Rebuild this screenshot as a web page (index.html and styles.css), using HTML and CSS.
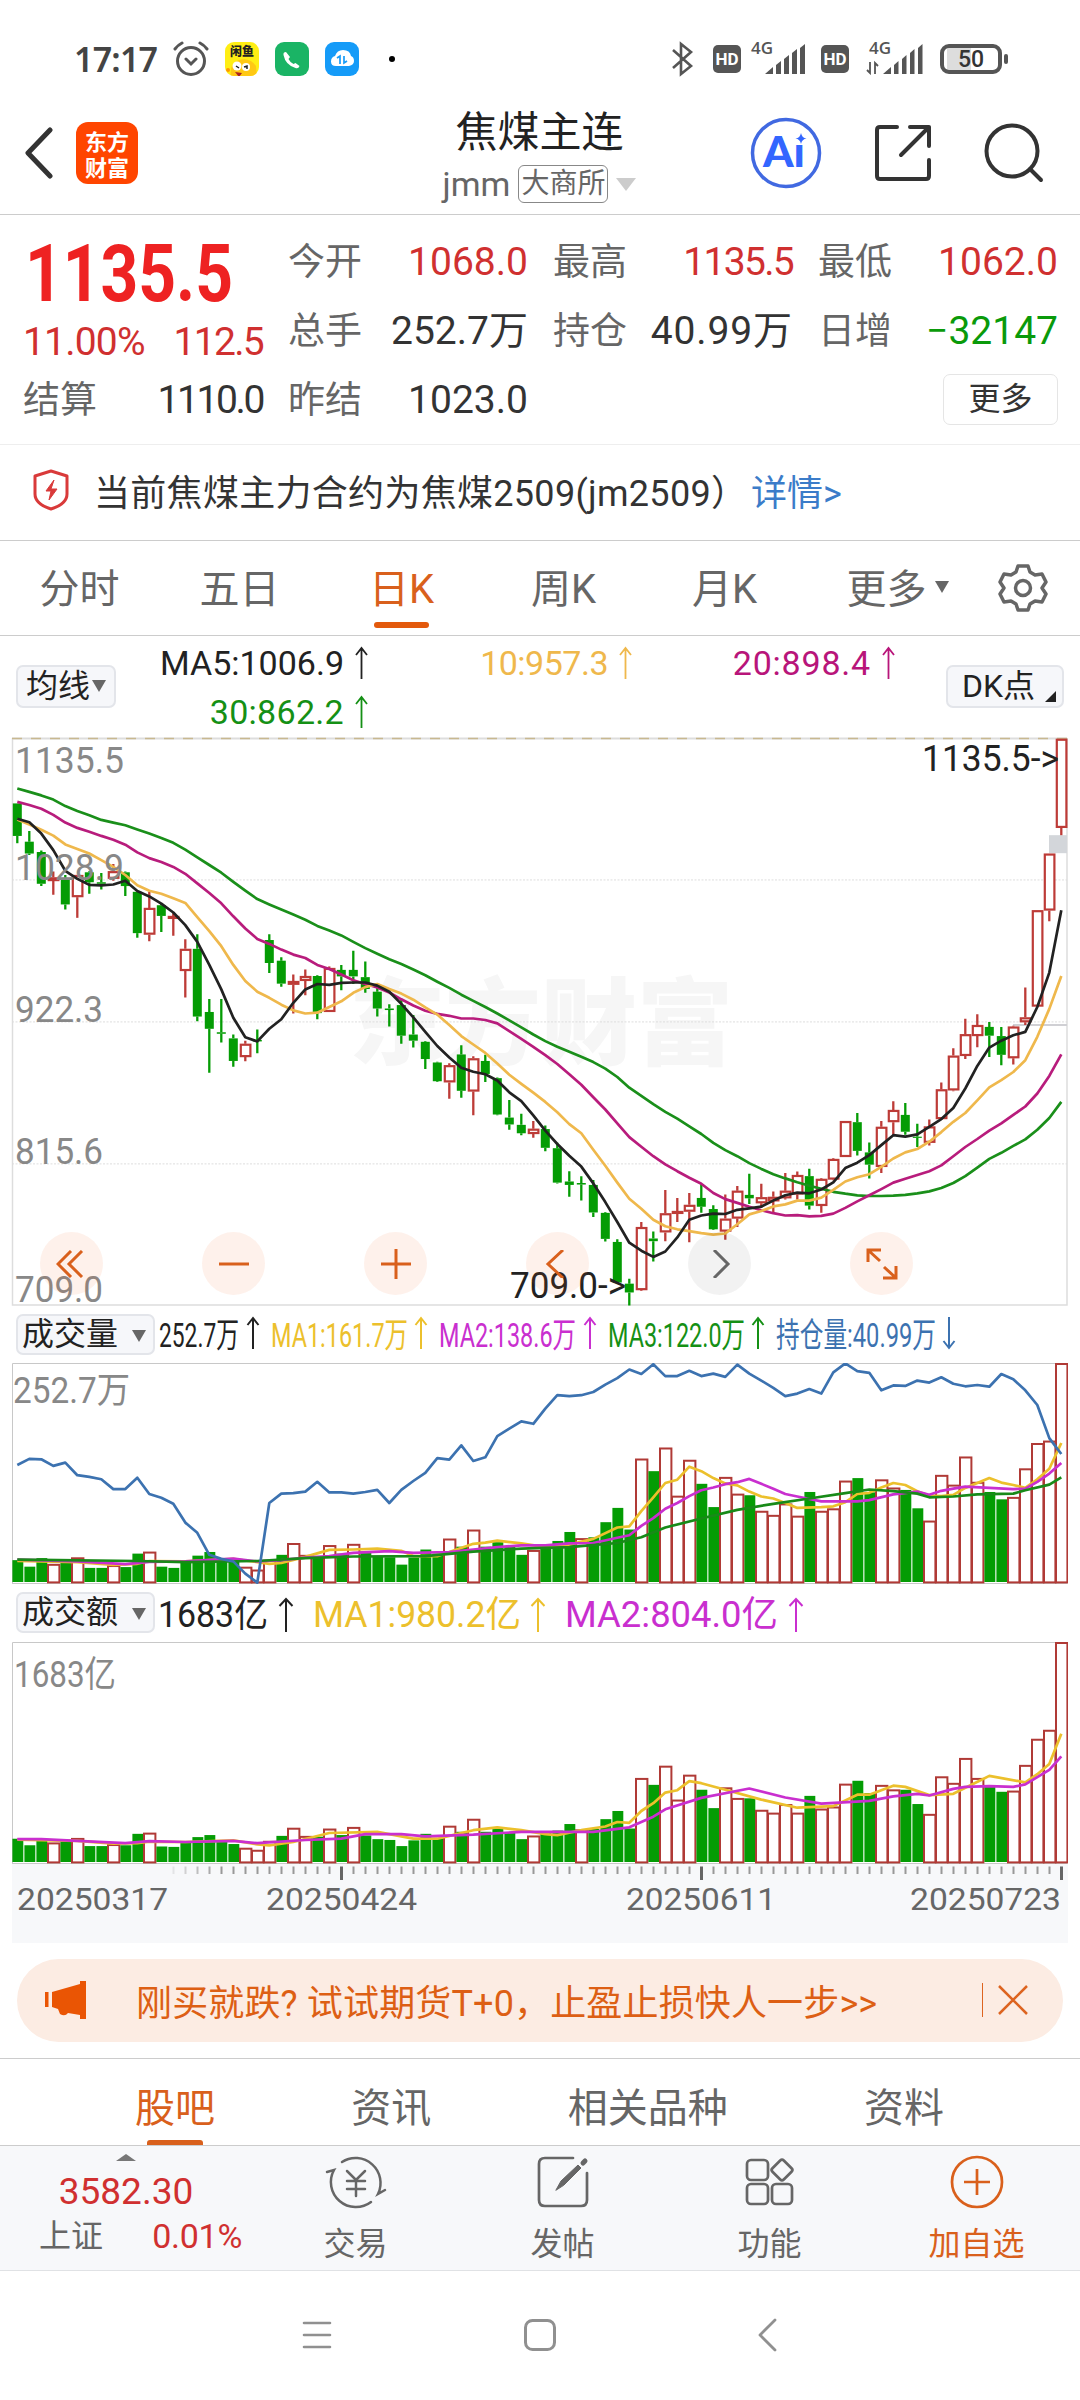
FILE: index.html
```html
<!DOCTYPE html>
<html lang="zh-CN">
<head>
  <meta charset="UTF-8">
  <meta name="viewport" content="width=device-width, initial-scale=1.0">
  <title>焦煤主连</title>
  <link rel="stylesheet" href="styles.css">
</head>
<body>
<div class="status-bar">
  <div class="status-left">
    <span class="clock">17:17</span>
    <svg class="alarm" width="36" height="36" viewBox="0 0 36 36" fill="none" stroke="#555" stroke-width="3" stroke-linecap="round">
      <circle cx="18" cy="20" r="13.5"/><path d="M13 18l5 5 5-5M2 8q3-4 7-6M34 8q-3-4-7-6"/>
    </svg>
    <div class="app-dot yellow">
      <span>闲鱼</span>
      <svg width="34" height="20" viewBox="0 0 34 20"><path d="M6 20Q4 6 14 3q11-3 17 6l1 11z" fill="#ffc814"/><circle cx="12" cy="9" r="4.5" fill="#fff"/><circle cx="21" cy="10" r="4" fill="#fff"/><path d="M11 9l3 2M19 10l3-1v3" stroke="#222" stroke-width="1.5" fill="none"/><path d="M10 15l7 1-3 4z" fill="#a22"/><circle cx="3" cy="13" r="2" fill="#f90"/></svg>
    </div>
    <div class="app-dot green">
      <svg width="34" height="34" viewBox="0 0 34 34"><path d="M11 10l4 5-1.500 2q2 4 5 5l2-1 4 3q-1 3-4 2-10-3-12-13-.5-3 2.500-3z" fill="#fff"/></svg>
    </div>
    <div class="app-dot blue">
      <svg width="34" height="34" viewBox="0 0 34 34"><path d="M11 24q-5 0-5-4.500T10 14q2-6 8-6 7 0 8 6 3 1 3 5t-5 5z" fill="#fff"/><path d="M12 16l3-2v8M19 14v7l3-2" stroke="#159bf8" stroke-width="1.700" fill="none"/></svg>
    </div>
    <span class="more-dot"></span>
  </div>
  <div class="status-right">
    <svg width="24" height="36" viewBox="0 0 24 36" fill="none" stroke="#555" stroke-width="2.600"><path d="M2 9l18 16-10 8V3l10 8L2 27"/></svg>
    <span class="hd">HD</span>
    <div class="signal">
      <span>4G</span>
      <svg width="56" height="32" viewBox="0 0 56 32" fill="#555"><path d="M14 31l8-7v7zM25 31V22l5-4v13zM33 31V16l5-4v19zM41 31V10l5-4v25zM49 31V5l5-4v30z"/></svg>
    </div>
    <span class="hd">HD</span>
    <div class="signal second">
      <span>4G</span>
      <svg width="58" height="32" viewBox="0 0 58 32" fill="#555"><path d="M17 31l8-7v7zM28 31V22l4.500-4v13zM36 31V16l4.500-4v19zM44 31V10l4.500-4v25zM52 31V5l4.500-4v30z"/><path d="M1 27l3 3V19M9 31V20l3 3" fill="none" stroke="#555" stroke-width="1.800"/></svg>
    </div>
    <div class="battery"><span>50</span></div>
  </div>
</div>

<header class="header">
  <div class="header-left">
    <svg width="30" height="52" viewBox="0 0 30 52" fill="none" stroke="#333" stroke-width="5" stroke-linecap="round" stroke-linejoin="round"><path d="M26 3L4 26l22 23"/></svg>
    <div class="logo">东方<br>财富</div>
  </div>
  <div class="header-title">
    <h1>焦煤主连</h1>
    <div class="sub-title">jmm<span class="exchange">大商所</span><i class="tri down light"></i></div>
  </div>
  <div class="header-actions">
    <svg width="72" height="72" viewBox="0 0 72 72">
      <circle cx="36" cy="36" r="33.500" fill="none" stroke="#4169e1" stroke-width="3.500"/>
      <text x="13" y="50" class="ai-text" textLength="42" lengthAdjust="spacingAndGlyphs">Aı</text>
      <path d="M51 16q1 5 5.500 5.500Q52 22 51 27q-1-5-5.500-5.500Q50 21 51 16z" fill="#3366ff"/>
    </svg>
    <svg width="58" height="58" viewBox="0 0 58 58" fill="none" stroke="#333" stroke-width="4" stroke-linecap="round" stroke-linejoin="round"><path d="M23 3H6q-3 0-3 3v46q0 3 3 3h46q3 0 3-3V36M36 3h19v19M55 3L27 31"/></svg>
    <svg width="60" height="60" viewBox="0 0 60 60" fill="none" stroke="#333" stroke-width="4" stroke-linecap="round"><circle cx="28" cy="28" r="25.500"/><path d="M46 46l11 11"/></svg>
  </div>
</header>

<section class="quote">
  <div class="quote-main">
    <svg class="last-price" width="240" height="92" viewBox="0 0 240 92"><text x="2" y="74" textLength="208" lengthAdjust="spacingAndGlyphs">1135.5</text></svg>
    <div class="change"><span>11.00%</span><span class="narrow">112.5</span></div>
  </div>
  <div class="item"><label>今开</label><span class="up">1068.0</span></div>
  <div class="item"><label>最高</label><span class="up narrow">1135.5</span></div>
  <div class="item"><label>最低</label><span class="up">1062.0</span></div>
  <div class="item"><label>总手</label><span>252.7万</span></div>
  <div class="item"><label>持仓</label><span class="wide">40.99万</span></div>
  <div class="item"><label>日增</label><span class="down-text">−32147</span></div>
  <div class="item"><label>结算</label><span class="narrow more">1110.0</span></div>
  <div class="item"><label>昨结</label><span>1023.0</span></div>
  <div class="item"></div>
  <div class="item end"><button class="more-btn">更多</button></div>
</section>

<section class="notice">
  <svg width="38" height="42" viewBox="0 0 38 42" fill="none" stroke="#d93a3a" stroke-width="3" stroke-linejoin="round"><path d="M19 2l16 5v18q0 10-16 15Q3 35 3 25V7z"/><path d="M22 11l-8 11h5l-2 9 8-11h-6z" fill="#d93a3a" stroke-width="1"/></svg>
  <span class="notice-text">当前焦煤主力合约为焦煤2509(jm2509）</span>
  <a class="notice-link">详情&gt;</a>
</section>

<nav class="period-tabs">
  <span>分时</span>
  <span>五日</span>
  <span class="active">日K</span>
  <span>周K</span>
  <span>月K</span>
  <span>更多<i class="tri down"></i></span>
  <div class="gear">
    <svg width="50" height="50" viewBox="0 0 50 50" fill="none" stroke="#666" stroke-width="3.500" stroke-linejoin="round"><path d="M20 3h10l2 6 5 3 7-1 4 8-4 6 4 6-4 8-7-1-5 3-2 6H20l-2-6-5-3-7 1-4-8 4-6-4-6 4-8 7 1 5-3z"/><circle cx="25" cy="25" r="7.500"/></svg>
  </div>
</nav>

<section class="ma-row">
  <button class="tool-btn ma-btn">均线<i class="tri down"></i></button>
  <div class="ma-values">
    <span class="c-black">MA5:1006.9<svg class="arrow" width="13" height="34" viewBox="0 0 13 34"><path d="M6.500 33V2M1 9l5.500-7L12 9"/></svg></span>
    <span class="c-yellow">10:957.3<svg class="arrow" width="13" height="34" viewBox="0 0 13 34"><path d="M6.500 33V2M1 9l5.500-7L12 9"/></svg></span>
    <span class="c-magenta">20:898.4<svg class="arrow" width="13" height="34" viewBox="0 0 13 34"><path d="M6.500 33V2M1 9l5.500-7L12 9"/></svg></span>
    <span class="c-green">30:862.2<svg class="arrow" width="13" height="34" viewBox="0 0 13 34"><path d="M6.500 33V2M1 9l5.500-7L12 9"/></svg></span>
  </div>
  <button class="tool-btn dk-btn">DK点<i class="corner"></i></button>
</section>

<section class="charts">
  <div class="price-pane">
    <svg id="priceChart" width="1056" height="568" viewBox="0 0 1056 568"></svg>
    <div class="chart-tools">
      <button><svg class="rewind" width="28" height="28" viewBox="0 0 28 28"><path d="M15 1L2 14l13 13M26 1L13 14l13 13"/></svg></button>
      <button><svg width="32" height="32" viewBox="0 0 32 32"><path d="M1 16h30"/></svg></button>
      <button><svg width="32" height="32" viewBox="0 0 32 32"><path d="M1 16h30M16 1v30"/></svg></button>
      <button><svg width="28" height="28" viewBox="0 0 28 28"><path d="M19 0L4 14l15 14"/></svg></button>
      <button class="disabled"><svg width="28" height="28" viewBox="0 0 28 28"><path d="M8 0l14 14L8 28"/></svg></button>
      <button><svg width="32" height="32" viewBox="0 0 32 32"><path d="M2 14V2h13M2 2l12 11M30 18v12H17M30 30L18 19"/></svg></button>
    </div>
  </div>

  <div class="sub-head">
    <button class="tool-btn pick">成交量<i class="tri down"></i></button>
    <svg width="900" height="56" viewBox="0 0 900 56" class="head-text">
      <text x="4" y="41" textLength="80" lengthAdjust="spacingAndGlyphs" class="c-black">252.7万</text>
      <text x="116" y="41" textLength="137" lengthAdjust="spacingAndGlyphs" class="c-gold">MA1:161.7万</text>
      <text x="284" y="41" textLength="137" lengthAdjust="spacingAndGlyphs" class="c-purple">MA2:138.6万</text>
      <text x="453" y="41" textLength="137" lengthAdjust="spacingAndGlyphs" class="c-green">MA3:122.0万</text>
      <text x="621" y="41" textLength="160" lengthAdjust="spacingAndGlyphs" class="c-blue">持仓量:40.99万</text>
      <path class="c-black" d="M98 43V12M92.500 19l5.500-7 5.500 7"/>
      <path class="c-gold" d="M266 43V12M260.500 19l5.500-7 5.500 7"/>
      <path class="c-purple" d="M435 43V12M429.500 19l5.500-7 5.500 7"/>
      <path class="c-green" d="M603 43V12M597.500 19l5.500-7 5.500 7"/>
      <path class="c-blue" d="M794 11v31M788.500 35l5.500 7 5.500-7"/>
    </svg>
  </div>
  <svg id="volumeChart" width="1056" height="221" viewBox="0 0 1056 221"></svg>

  <div class="sub-head second">
    <button class="tool-btn pick">成交额<i class="tri down"></i></button>
    <svg width="900" height="56" viewBox="0 0 900 56" class="head-text wide">
      <text x="3" y="43" textLength="110" lengthAdjust="spacingAndGlyphs" class="c-black">1683亿</text>
      <text x="158" y="43" textLength="208" lengthAdjust="spacingAndGlyphs" class="c-gold">MA1:980.2亿</text>
      <text x="410" y="43" textLength="213" lengthAdjust="spacingAndGlyphs" class="c-purple">MA2:804.0亿</text>
      <path class="c-black" d="M131 48V15M124.500 22l6.500-7 6.500 7"/>
      <path class="c-gold" d="M383 48V15M376.500 22l6.500-7 6.500 7"/>
      <path class="c-purple" d="M641 48V15M634.500 22l6.500-7 6.500 7"/>
    </svg>
  </div>
  <svg id="turnoverChart" width="1056" height="222" viewBox="0 0 1056 222"></svg>
  <svg id="axis" class="axis" width="1056" height="79" viewBox="0 0 1056 79"></svg>
</section>

<section class="banner">
  <svg width="44" height="38" viewBox="0 0 44 38" fill="#ea5504"><path d="M1 11h3.500v15H1zM8 11l28-8V0h6v38h-6v-4l-12-2q-3 4-8 1l-2-5-6-2z"/></svg>
  <span class="banner-text">刚买就跌? 试试期货T+0，止盈止损快人一步&gt;&gt;</span>
  <i class="sep"></i>
  <svg width="30" height="30" viewBox="0 0 30 30" fill="none" stroke="#dd6420" stroke-width="2.500"><path d="M1 1l28 28M29 1L1 29"/></svg>
</section>

<nav class="info-tabs">
  <span class="active">股吧</span>
  <span>资讯</span>
  <span>相关品种</span>
  <span>资料</span>
</nav>

<footer class="bottom-bar">
  <div class="index-box">
    <i class="tri up"></i>
    <div class="index-value">3582.30</div>
    <div class="index-line"><label>上证</label><span>0.01%</span></div>
  </div>
  <div class="action">
    <svg width="62" height="54" viewBox="0 0 62 54" fill="none" stroke="#666" stroke-width="2.500" stroke-linecap="round"><path d="M17 7A25 25 0 0 1 53 39l7-4M46 47A25 25 0 0 1 9 15l-7 2"/><path d="M22 16l9 9 9-9M31 25v16M22 26h18M22 34h18"/></svg>
    <span>交易</span>
  </div>
  <div class="action">
    <svg width="54" height="54" viewBox="0 0 54 54" fill="none" stroke="#666" stroke-width="2.700" stroke-linecap="round"><path d="M37 3H9Q3 3 3 9v36q0 6 6 6h36q6 0 6-6V18"/><path d="M20 35l5-9L42 10l3 3-17 17z" fill="#666" stroke-width="1"/><path d="M47 8l2-2" stroke-width="5"/></svg>
    <span>发帖</span>
  </div>
  <div class="action">
    <svg width="54" height="54" viewBox="0 0 54 54" fill="none" stroke="#666" stroke-width="2.700"><rect x="4" y="5" width="21" height="20" rx="4"/><rect x="4" y="29" width="21" height="20" rx="4"/><rect x="29" y="29" width="20" height="20" rx="4"/><rect x="31" y="7" width="16" height="16" rx="2.500" transform="rotate(45 39 15)"/></svg>
    <span>功能</span>
  </div>
  <div class="action accent">
    <svg width="54" height="54" viewBox="0 0 54 54" fill="none" stroke="#d9601c" stroke-width="2.700"><circle cx="27" cy="27" r="25"/><path d="M14 27h26M27 14v26"/></svg>
    <span>加自选</span>
  </div>
</footer>

<div class="system-nav">
  <svg width="30" height="28" viewBox="0 0 30 28" fill="none" stroke="#909090" stroke-width="2.600" stroke-linecap="round"><path d="M2 2h26M2 14h26M2 26h26"/></svg>
  <svg width="32" height="32" viewBox="0 0 32 32" fill="none" stroke="#909090" stroke-width="3"><rect x="1.500" y="1.500" width="29" height="29" rx="7"/></svg>
  <svg width="20" height="34" viewBox="0 0 20 34" fill="none" stroke="#909090" stroke-width="2.800" stroke-linecap="round" stroke-linejoin="round"><path d="M18 2L3 17l15 15"/></svg>
</div>

<script src="chart.js"></script>
</body>
</html>
```
FILE: styles.css
```css
* {
  box-sizing: border-box;
}
body {
  margin: 0;
  width: 1080px;
  height: 2400px;
  overflow: hidden;
  background: #fff;
  color: #333;
  font-family: Roboto, "Noto Sans CJK SC", sans-serif;
}
svg {
  display: block;
  flex: none;
}
button {
  font-family: inherit;
  padding: 0;
}
.tri {
  display: inline-block;
  border: 7px solid transparent;
}
.tri.down {
  border-top: 12px solid #666;
  border-bottom: 0;
}
.tri.up {
  border-width: 0 10px 7px;
  border-bottom-color: #777;
}
.tri.down.light {
  border-width: 13px 10px 0;
  border-top-color: #ccc;
}

/* status bar */
.status-bar {
  height: 100px;
  padding: 17px 72px 0 74px;
  display: flex;
  justify-content: space-between;
  align-items: center;
}
.status-left, .status-right {
  display: flex;
  align-items: center;
  height: 36px;
}
.clock {
  font: 600 34px "Noto Sans", sans-serif;
  color: #444;
  width: 84px;
  white-space: nowrap;
  letter-spacing: -0.8px;
}
.alarm {
  margin: 0 16px 0 15px;
}
.app-dot {
  width: 34px;
  height: 34px;
  margin-right: 16px;
  border-radius: 9px;
  overflow: hidden;
}
.yellow {
  background: #ffee14;
}
.yellow span {
  display: block;
  height: 15px;
  font: 900 12px/17px "Noto Sans CJK SC", sans-serif;
  color: #222;
  text-align: center;
}
.green {
  background: #1ab465;
}
.blue {
  background: #159bf8;
}
.more-dot {
  width: 6px;
  height: 6px;
  margin-left: 14px;
  border-radius: 50%;
  background: #000;
}
.hd {
  width: 28px;
  height: 28px;
  margin: 0 10px 0 18px;
  border-radius: 5px;
  background: #555;
  color: #fff;
  font: 700 17px/28px Roboto, sans-serif;
  text-align: center;
}
.signal {
  position: relative;
}
.signal span {
  position: absolute;
  left: 0;
  top: -5px;
  font: 600 17px/20px "Open Sans", sans-serif;
  color: #555;
}
.signal.second {
  margin: 0 16px 0 -4px;
}
.signal.second span {
  left: 3px;
}
.signal + .hd {
  margin-left: 14px;
  margin-right: 21px;
}
.battery {
  position: relative;
  width: 62px;
  height: 30px;
  margin-right: 6px;
  border: 4px solid #555;
  border-radius: 9px;
  background: linear-gradient(90deg, #fff 3px, #ddd 3px, #ddd 50%, #fff 50%);
  font: 500 23px/23px Roboto, sans-serif;
  text-align: center;
}
.battery::after {
  content: "";
  position: absolute;
  right: -10px;
  top: 6px;
  width: 4px;
  height: 10px;
  border-radius: 2px;
  background: #555;
}

/* header */
.header {
  height: 115px;
  padding: 0 36px 8px 24px;
  border-bottom: 1px solid #ccc;
  display: grid;
  grid-template-columns: 1fr 340px 1fr;
  align-items: center;
}
.header-left {
  display: flex;
  align-items: center;
  gap: 22px;
}
.logo {
  width: 62px;
  height: 62px;
  padding-top: 5px;
  border-radius: 12px;
  background: #ff4500;
  color: #fff;
  font: 700 22px/26px "Noto Sans CJK SC", sans-serif;
  text-align: center;
}
.header-title {
  padding: 5px 0 0 11px;
  text-align: center;
}
.header-title h1 {
  margin: 0 0 3px;
  font-size: 42px;
  line-height: 54px;
  font-weight: 400;
  color: #222;
}
.sub-title {
  display: flex;
  justify-content: center;
  align-items: center;
  gap: 8px;
  height: 42px;
  font-size: 34px;
  color: #666;
}
.exchange {
  height: 38px;
  padding: 0 2px;
  border: 1.5px solid #888;
  border-radius: 6px;
  font-size: 28px;
  line-height: 35px;
}
.header-actions {
  display: flex;
  justify-content: flex-end;
  align-items: center;
  gap: 52px;
}
.ai-text {
  font: 900 42px Lato, sans-serif;
  fill: #3366ff;
}

/* quote */
.quote {
  height: 230px;
  padding: 12px 22px 0 23px;
  border-bottom: 1px solid #eee;
  display: grid;
  grid-template-columns: repeat(4, 1fr);
  grid-auto-rows: 69px;
  column-gap: 25px;
}
.quote-main {
  grid-row: span 2;
}
.last-price {
  font-size: 79px;
  font-weight: 700;
  fill: #ee2222;
}
.change {
  display: flex;
  justify-content: space-between;
  padding-top: 3px;
  font-size: 39px;
  line-height: 40px;
  letter-spacing: -0.8px;
  color: #d03030;
}
.item {
  display: flex;
  justify-content: space-between;
  align-items: center;
  height: 71px;
  font-size: 39px;
  line-height: 45px;
}
.item span {
  height: 45px;
}
.item label {
  height: 45px;
  margin-top: -1px;
  font-size: 37px;
  color: #666;
}
.narrow {
  letter-spacing: -1.7px;
}
.narrow.more {
  letter-spacing: -2.4px;
}
.item .wide {
  letter-spacing: 0.9px;
}
.item.end {
  justify-content: flex-end;
}
.up {
  color: #d03030;
}
.down-text {
  color: #0a9a0a;
}
.more-btn {
  width: 115px;
  height: 51px;
  margin-top: -3px;
  border: 1.5px solid #e5e5e5;
  border-radius: 7px;
  background: #fff;
  font-size: 32px;
  line-height: 44px;
  color: #333;
}

/* notice */
.notice {
  height: 96px;
  padding: 0 0 6px 32px;
  border-bottom: 1px solid #ccc;
  display: flex;
  align-items: center;
  font-size: 36px;
}
.notice-text {
  width: 633px;
  margin-left: 24px;
  letter-spacing: 0.3px;
  white-space: nowrap;
}
.notice-link {
  margin-left: 24px;
  color: #3b7cc9;
}

/* period tabs */
.period-tabs {
  height: 95px;
  border-bottom: 1px solid #ccc;
  display: grid;
  grid-template-columns: 159px 161px 163px repeat(3, 161px) 1fr;
  font-size: 40px;
  line-height: 98px;
  text-align: center;
  color: #666;
}
.period-tabs span {
  position: relative;
  height: 94px;
  white-space: nowrap;
}
.period-tabs .tri {
  margin: 0 -6px 10px 8px;
}
.period-tabs span:nth-child(6) {
  padding-left: 18px;
}
.period-tabs .active {
  color: #d9601c;
}
.period-tabs .active::after {
  content: "";
  position: absolute;
  left: 54px;
  bottom: 7px;
  width: 55px;
  height: 6px;
  border-radius: 3px;
  background: #e3590c;
}
.gear {
  padding: 22px 0 0 32px;
}

/* moving averages */
.ma-row {
  height: 102px;
  padding: 0 16px;
  display: flex;
  align-items: flex-start;
}
.tool-btn {
  flex: none;
  height: 43px;
  border: 2px solid #e3e5ea;
  border-radius: 7px;
  background: #f6f7fa;
  color: #222;
  font-size: 32px;
  line-height: 39px;
  white-space: nowrap;
}
.ma-btn {
  width: 100px;
  margin-top: 29px;
}
.ma-btn .tri {
  margin: 0 0 5px 2px;
}
.dk-btn {
  width: 118px;
  margin: 29px 0 0 auto;
}
.corner {
  display: inline-block;
  margin: 0 -8px -5px 10px;
  border-left: 11px solid transparent;
  border-bottom: 11px solid #222;
}
.ma-values {
  width: 791px;
  display: grid;
  grid-template-columns: 252px 264px 263px;
  grid-auto-rows: 49px;
  margin-top: 2px;
  font-size: 34px;
}
.ma-values span {
  display: flex;
  justify-content: flex-end;
  align-items: center;
  gap: 11px;
}
.ma-values .c-magenta {
  letter-spacing: 0.8px;
}
.ma-values .c-green {
  letter-spacing: 0.3px;
}
.ma-values .c-yellow {
  letter-spacing: -0.5px;
}
.ma-values .arrow {
  fill: none;
  stroke-width: 1.8;
}
.c-black { color: #222; fill: #222; stroke: #222; }
.c-yellow { color: #efb84c; stroke: #efb84c; }
.c-magenta { color: #b8157a; stroke: #b8157a; }
.c-green { color: #159015; fill: #159015; stroke: #159015; }
.c-gold { fill: #ecc02c; stroke: #ecc02c; }
.c-purple { fill: #c92fcf; stroke: #c92fcf; }
.c-blue { fill: #3c72b0; stroke: #3c72b0; }

/* charts */
.charts {
  padding-left: 12px;
}
.price-pane {
  position: relative;
}
#priceChart, .last-price {
  overflow: visible;
}
.chart-tools {
  position: absolute;
  left: 28px;
  top: 494px;
  display: flex;
  gap: 99px;
}
.chart-tools button {
  width: 63px;
  height: 63px;
  border: 0;
  border-radius: 50%;
  background: rgba(245, 100, 30, 0.09);
  display: flex;
  justify-content: center;
  align-items: center;
}
.chart-tools .rewind {
  margin-right: 4px;
}
.chart-tools path {
  fill: none;
  stroke: #d9601c;
  stroke-width: 3;
}
.chart-tools .disabled {
  background: rgba(0, 0, 0, 0.05);
}
.chart-tools .disabled path {
  stroke: #666;
}
.sub-head {
  height: 57px;
  padding: 0 0 0 4px;
  display: flex;
}
.sub-head.second {
  height: 58px;
}
.pick {
  width: 139px;
  height: 41px;
  margin-top: 8px;
  padding-left: 4px;
  line-height: 37px;
  text-align: left;
}
.pick .tri {
  margin: 0 0 3px 14px;
}
.head-text text {
  font-size: 34px;
  stroke: none;
}
.head-text.wide text {
  font-size: 36px;
}
.head-text path {
  fill: none;
  stroke-width: 2;
}
.scale-label {
  font-size: 36px;
  fill: #888;
}
.mark-label {
  font-size: 36px;
  fill: #222;
}
.watermark {
  font: 900 95px "Noto Sans CJK SC", sans-serif;
  fill: #f6f6f6;
}
.axis {
  background: #f7f8fa;
}
.axis text {
  font-size: 32px;
  fill: #666;
}
.line {
  fill: none;
  stroke-width: 2.7;
  stroke-linejoin: round;
}

/* banner */
.banner {
  width: 1046px;
  height: 83px;
  margin: 16px 17px;
  padding: 0 35px 1px 27px;
  border-radius: 42px;
  background: #fcece3;
  display: flex;
  align-items: center;
  font-size: 36px;
  color: #dd5f14;
}
.banner-text {
  margin: 0 auto 0 48px;
  letter-spacing: 0.15px;
  white-space: nowrap;
}
.sep {
  width: 1px;
  height: 34px;
  margin-right: 15px;
  background: #dd6420;
}

/* info tabs */
.info-tabs {
  height: 88px;
  padding: 3px 136px 0 135px;
  border-top: 1px solid #ccc;
  border-bottom: 1px solid #ccc;
  display: flex;
  justify-content: space-between;
  font-size: 40px;
  line-height: 93px;
  color: #666;
}
.info-tabs span {
  height: 83px;
}
.info-tabs .active {
  position: relative;
  color: #d9601c;
}
.info-tabs .active::after {
  content: "";
  position: absolute;
  left: 12px;
  bottom: 0;
  width: 56px;
  height: 5px;
  border-radius: 3px 3px 0 0;
  background: #d9601c;
}

/* bottom bar */
.bottom-bar {
  height: 125px;
  border-bottom: 1px solid #e0e2e5;
  background: #f7f8fa;
  display: grid;
  grid-template-columns: 252px repeat(4, 207px);
}
.index-box {
  display: flex;
  flex-direction: column;
  align-items: center;
  padding: 8px 0 0 0;
  color: #d03030;
}
.index-value {
  margin-top: 9px;
  font-size: 37px;
  line-height: 44px;
}
.index-line {
  align-self: stretch;
  display: flex;
  justify-content: space-between;
  padding: 0 10px 0 39px;
  font-size: 34px;
  line-height: 45px;
}
.index-line span {
  letter-spacing: -0.3px;
}
.index-line label {
  font-size: 32px;
  color: #666;
}
.action {
  display: flex;
  flex-direction: column;
  align-items: center;
  padding: 9px 0 0 0;
  font-size: 32px;
  line-height: 40px;
  color: #666;
}
.action span {
  margin-top: 15px;
}
.action.accent {
  color: #d9601c;
}

/* system navigation */
.system-nav {
  height: 127px;
  padding: 0 302px;
  display: grid;
  grid-template-columns: 222px 233px 20px;
  align-items: center;
}
```
FILE: chart.js
```js
const STEP = 12;
const RED = '#bd3b37';
const GREEN = '#049c04';

// every value below is counted downwards from the top of its pane's scale
// candle: [colour, open/close top, open/close bottom, high, low]
const candles = [
  ['g',218,303,218,322],['g',318,349,290,353],['g',345,428,341,434],['r',411,421,396,457],['g',415,482,405,495],['r',405,463,405,517],
  ['g',398,424,395,454],['g',424,428,400,443],['r',395,415,376,420],['g',398,434,396,460],['g',449,557,449,569],['r',491,561,449,578],
  ['g',484,512,480,554],['r',512,519,505,564],['r',598,656,573,725],['g',598,775,560,787],['g',763,807,729,922],['g',816,820,729,843],
  ['g',832,891,822,906],['r',846,881,838,892],['g',836,840,809,871],['g',575,635,560,661],['g',629,689,620,697],['r',682,692,665,767],
  ['r',669,682,652,719],['g',669,766,667,782],['r',648,763,644,763],['g',653,670,640,706],['g',653,670,603,690],['g',672,703,631,713],
  ['g',710,754,700,775],['g',754,758,743,801],['g',745,825,732,846],['g',822,838,771,856],['g',841,886,839,912],['g',895,944,893,946],
  ['r',902,947,897,990],['g',874,969,850,987],['r',884,971,879,1033],['g',891,925,875,946],['g',936,1031,934,1033],['g',1039,1057,993,1071],
  ['g',1058,1080,1029,1085],['r',1068,1082,1048,1092],['g',1069,1118,1060,1127],['g',1119,1209,1105,1211],['g',1206,1215,1179,1246],['g',1210,1214,1192,1256],
  ['g',1215,1287,1202,1299],['g',1288,1356,1286,1363],['g',1364,1470,1357,1472],['g',1473,1496,1460,1530],['r',1325,1490,1312,1492],['g',1355,1362,1337,1415],
  ['r',1289,1339,1228,1362],['r',1283,1290,1249,1312],['r',1267,1285,1236,1365],['g',1249,1272,1213,1288],['g',1278,1331,1268,1333],['r',1303,1337,1240,1358],
  ['r',1230,1303,1218,1325],['g',1241,1250,1186,1265],['r',1247,1263,1212,1270],['r',1246,1258,1232,1288],['r',1230,1250,1184,1253],['r',1189,1240,1180,1253],
  ['g',1192,1269,1173,1279],['r',1199,1270,1197,1288],['r',1147,1201,1145,1203],['r',1048,1142,1048,1142],['g',1051,1126,1027,1138],['g',1130,1162,1104,1198],
  ['r',1063,1168,1048,1184],['r',1019,1051,996,1085],['g',1032,1076,1001,1084],['g',1089,1092,1055,1116],['r',1062,1105,1044,1112],['r',965,1043,947,1045],
  ['r',877,968,858,970],['r',821,878,781,886],['r',797,826,769,855],['g',802,825,789,881],['g',826,875,802,902],['r',801,884,799,900],
  ['r',777,790,699,797],['r',497,749,497,749],['r',349,498,349,526],['r',49,282,49,301]
];

const ma5 = [258,267,297,340,394,415,431,432,430,420,447,461,480,503,536,580,640,704,778,829,840,807,782,739,704,690,692,687,686,686,694,710,742,777,815,852,882,909,919,926,942,973,996,1033,1073,1108,1139,1167,1211,1260,1312,1366,1387,1403,1389,1352,1306,1295,1290,1291,1280,1276,1272,1256,1242,1235,1237,1227,1208,1171,1157,1137,1111,1085,1089,1083,1063,1043,1014,963,904,856,838,824,815,750,660,497];
const ma10 = [260,273,287,302,325,337,349,366,384,405,432,446,454,466,478,515,552,591,640,682,710,726,744,759,767,765,750,735,713,698,690,703,715,731,751,770,797,826,848,870,898,927,951,974,998,1025,1056,1080,1123,1165,1209,1251,1277,1306,1323,1331,1336,1341,1345,1342,1318,1292,1283,1271,1266,1256,1256,1248,1228,1206,1195,1187,1168,1146,1130,1121,1102,1077,1050,1027,994,960,941,920,889,828,755,669];
const ma20 = [214,222,232,248,268,282,292,303,313,326,346,361,371,384,402,427,452,479,513,545,572,585,600,613,622,640,651,665,680,690,699,712,730,746,760,768,773,780,780,784,793,813,833,854,876,899,926,953,986,1018,1054,1090,1115,1140,1161,1179,1196,1212,1236,1252,1262,1272,1281,1289,1295,1294,1297,1296,1290,1275,1258,1242,1226,1209,1199,1189,1179,1164,1140,1116,1095,1073,1054,1032,1010,976,930,874];
const ma30 = [179,188,197,208,225,238,249,261,268,275,286,297,308,321,339,359,379,399,423,446,468,482,495,508,522,538,550,563,580,596,611,625,638,652,667,684,700,718,734,750,767,785,803,822,839,854,867,880,894,911,933,961,982,1004,1024,1042,1062,1082,1105,1124,1140,1158,1173,1187,1198,1208,1217,1225,1233,1238,1242,1244,1244,1243,1241,1237,1232,1223,1210,1192,1170,1147,1131,1113,1096,1071,1040,998];

const barColours = 'gggrgrggrggrgggggggrrrgrrgrgrgggggggrgrggggrgggrggggrgrrrggrrgrrrrgrrrggrrggrrrrrggrrrrr';
const volume = [638,654,633,647,645,631,657,657,650,655,622,617,654,657,645,627,618,637,641,654,661,637,625,596,625,628,601,622,598,617,628,631,649,632,612,622,585,605,563,605,594,605,625,613,606,591,569,584,582,545,510,563,389,420,362,480,392,451,508,434,475,479,517,527,499,529,471,517,511,443,437,472,440,460,466,511,541,429,453,384,446,471,489,483,413,351,345,155];
const turnover = [1320,1336,1325,1329,1326,1318,1338,1338,1333,1336,1308,1305,1339,1340,1330,1316,1311,1328,1333,1342,1347,1325,1313,1293,1313,1315,1295,1311,1291,1312,1321,1323,1338,1324,1308,1319,1288,1303,1271,1303,1296,1305,1321,1312,1306,1300,1284,1297,1296,1272,1252,1295,1171,1188,1141,1224,1163,1200,1245,1194,1220,1221,1249,1256,1235,1256,1215,1246,1241,1185,1178,1208,1188,1199,1200,1235,1259,1167,1183,1122,1171,1192,1205,1202,1139,1075,1053,838];
const holding = [405,390,391,407,399,430,434,440,464,464,436,476,485,500,546,571,625,635,641,671,693,498,475,474,470,446,472,472,475,471,466,498,466,444,424,388,392,357,395,386,334,316,298,304,267,234,236,234,226,208,192,171,182,158,187,187,174,187,181,189,159,181,198,216,236,230,219,230,178,156,175,179,222,210,211,198,203,190,206,212,209,213,182,195,222,258,339,378];

// sparse lines: [index, value]
const volMa1 = [[0,640],[5,643],[8,650],[10,647],[11,640],[14,641],[18,635],[21,647],[22,645],[24,630],[26,613],[28,612],[30,610],[32,615],[33,628],[35,628],[36,618],[38,598],[39,595],[40,590],[42,597],[44,606],[46,600],[48,586],[50,558],[51,555],[52,518],[53,484],[54,449],[55,441],[56,409],[57,420],[58,437],[59,450],[60,455],[61,470],[62,482],[63,487],[64,498],[65,510],[67,508],[68,506],[69,496],[70,476],[71,473],[72,460],[73,449],[74,454],[75,469],[76,480],[77,481],[78,478],[79,461],[80,449],[81,437],[82,448],[83,454],[84,461],[85,440],[86,414],[87,351]];
const volMa2 = [[0,637],[5,641],[9,648],[11,642],[14,641],[18,634],[20,641],[22,638],[24,632],[26,628],[28,620],[31,616],[33,620],[36,618],[38,612],[40,606],[42,602],[44,602],[46,597],[48,596],[50,583],[51,577],[52,554],[53,535],[54,512],[55,498],[56,481],[57,467],[58,460],[59,452],[60,447],[61,439],[62,451],[63,463],[64,476],[65,482],[67,494],[70,494],[71,491],[73,477],[75,470],[76,478],[77,468],[78,463],[79,458],[81,461],[83,464],[84,463],[85,446],[86,426],[87,400]];
const volMa3 = [[0,637],[10,640],[14,643],[20,640],[24,633],[28,629],[34,628],[38,617],[42,610],[46,606],[50,596],[52,582],[54,558],[57,536],[60,515],[63,500],[66,487],[69,474],[71,465],[73,469],[75,475],[76,484],[78,482],[80,477],[83,475],[84,467],[86,453],[87,435]];
const turnMa1 = [[0,1322],[5,1325],[8,1332],[10,1331],[11,1327],[14,1328],[18,1324],[20,1334],[21,1336],[23,1328],[26,1306],[30,1303],[33,1320],[35,1320],[36,1313],[38,1299],[40,1292],[42,1299],[44,1309],[45,1311],[47,1299],[49,1290],[50,1279],[51,1281],[52,1252],[53,1233],[54,1207],[55,1201],[56,1179],[57,1184],[59,1200],[62,1224],[65,1244],[68,1240],[70,1212],[71,1212],[73,1190],[74,1193],[76,1213],[78,1210],[81,1166],[84,1182],[85,1162],[86,1137],[87,1063]];
const turnMa2 = [[0,1321],[2,1321],[5,1325],[9,1331],[11,1326],[14,1328],[18,1325],[20,1331],[24,1323],[27,1320],[29,1309],[32,1309],[34,1314],[38,1310],[42,1303],[48,1303],[51,1292],[53,1266],[54,1248],[57,1220],[61,1197],[64,1219],[67,1234],[71,1227],[73,1216],[75,1210],[76,1214],[78,1198],[79,1193],[81,1191],[83,1193],[84,1187],[86,1151],[87,1118]];

const midX = i => 5.3 + i * STEP;

function line(points, y, colour) {
  const pts = points.map((p, i) => Array.isArray(p) ? midX(p[0]) + ',' + y(p[1]).toFixed(1) : midX(i) + ',' + y(p).toFixed(1));
  return `<polyline class="line" stroke="${colour}" points="${pts.join(' ')}"/>`;
}

function label(x, y, width, text, cls) {
  return `<text x="${x}" y="${y}" textLength="${width}" lengthAdjust="spacingAndGlyphs" class="${cls}">${text}</text>`;
}

function drawPrice() {
  const y = v => v / 2.6133 - 18;
  let out = label(337, 320, 384, '东方财富', 'watermark');
  out += '<path d="M.5 0V567H1055V0" fill="none" stroke="#ddd" stroke-width="1.5"/>';
  out += '<path d="M0 .5H1055" stroke="#ddd" stroke-width="2"/><path d="M0 .5H1055" stroke="#c8b890" stroke-width="1.3" stroke-dasharray="10 9"/>';
  [418, 789, 1160].forEach(v => {
    out += `<path d="M0 ${y(v)}H1055" stroke="#ddd" stroke-dasharray="2 1.5"/>`;
  });
  out += `<path d="M1001 ${y(797)}H1055" stroke="#d0d0d4" stroke-width="2"/>`;
  out += `<rect x="1037" y="${y(301)}" width="18" height="18" fill="#d3d6da"/>`;
  candles.forEach((c, i) => {
    const x = midX(i);
    const [kind, top, bottom, high, low] = c;
    const colour = kind === 'g' ? GREEN : RED;
    out += `<path d="M${x} ${y(high)}V${y(top)}M${x} ${y(bottom)}V${y(low)}" stroke="${colour}" stroke-width="2.3"/>`;
    if (kind === 'g') {
      out += `<rect x="${x - 4.5}" y="${y(top)}" width="9" height="${y(bottom) - y(top)}" fill="${GREEN}"/>`;
    } else {
      out += `<rect x="${x - 4.5}" y="${y(top) + 1}" width="9.6" height="${Math.max(1, y(bottom) - y(top) - 2)}" fill="#fff" stroke="${RED}" stroke-width="2.2"/>`;
    }
  });
  out += line(ma30, y, '#1a8f1a') + line(ma20, y, '#b81c7c') + line(ma10, y, '#efb84c') + line(ma5, y, '#222');
  out += label(3, 35, 109, '1135.5', 'scale-label');
  out += label(3, 142, 109, '1028.9', 'scale-label');
  out += label(3, 284, 88, '922.3', 'scale-label');
  out += label(3, 426, 88, '815.6', 'scale-label');
  out += label(3, 564, 88, '709.0', 'scale-label');
  out += label(910, 33, 137, '1135.5-&gt;', 'mark-label');
  out += label(498, 560, 116, '709.0-&gt;', 'mark-label');
  document.getElementById('priceChart').innerHTML = out;
}

function drawBars(values, y, height) {
  const floor = height - 2;
  let out = `<path d="M.5 ${height}V.5H1055V${height}" fill="none" stroke="#c8c8c8"/><path d="M0 ${height - 0.5}H1055" stroke="#c8c8c8"/>`;
  values.forEach((v, i) => {
    const x = i * STEP;
    if (barColours[i] === 'g') {
      out += `<rect x="${x + 0.4}" y="${y(v)}" width="10.9" height="${floor - y(v)}" fill="${GREEN}"/>`;
    } else {
      out += `<rect x="${x}" y="${y(v) + 1}" width="11.4" height="${floor - y(v) - 0.6}" fill="#fff" stroke="#b03a36" stroke-width="2"/>`;
    }
  });
  return out;
}

function drawVolume() {
  const y = v => (v - 155) / 2.45;
  let out = drawBars(volume, y, 221);
  out += line(volMa1, y, '#ecc02c') + line(volMa2, y, '#c92fcf') + line(volMa3, y, '#188a18') + line(holding, y, '#3c72b0');
  out += label(1, 40, 117, '252.7万', 'scale-label');
  document.getElementById('volumeChart').innerHTML = out;
}

function drawTurnover() {
  const y = v => (v - 838) / 2.45;
  let out = drawBars(turnover, y, 222);
  out += line(turnMa1, y, '#ecc02c') + line(turnMa2, y, '#c92fcf');
  out += label(2, 45, 102, '1683亿', 'scale-label');
  document.getElementById('turnoverChart').innerHTML = out;
}

function drawAxis() {
  let out = '';
  for (let i = 13; i < 88; i++) {
    const major = i === 27 || i === 57 || i === 87;
    const x = i * STEP + 5.5;
    const opacity = Math.min(1, (i - 12) / 5);
    out += `<path d="M${x} 2.500V${major ? 16 : 10}" stroke="${major ? '#666' : '#999'}" stroke-width="${major ? 3 : 2}" opacity="${opacity}"/>`;
  }
  out += label(5, 45.5, 151, '20250317', '') + label(254, 45.5, 151, '20250424', '');
  out += label(614, 45.5, 150, '20250611', '') + label(898, 45.5, 151, '20250723', '');
  document.getElementById('axis').innerHTML = out;
}

drawPrice();
drawVolume();
drawTurnover();
drawAxis();
```
